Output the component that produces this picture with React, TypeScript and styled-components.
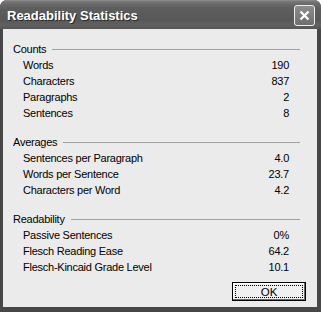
import styled, { createGlobalStyle } from "styled-components";

const GlobalStyle = createGlobalStyle`
  html, body {
    margin: 0;
    padding: 0;
    background: #ffffff;
  }
`;

const Window = styled.div`
  width: 321px;
  height: 312px;
  box-sizing: border-box;
  display: flex;
  flex-direction: column;
  background: #474747;
  border-radius: 7px 7px 0 0;
  overflow: hidden;
  font-family: "Liberation Sans", Arial, sans-serif;
`;

const TitleBar = styled.div`
  height: 29px;
  flex: none;
  display: flex;
  align-items: center;
  justify-content: space-between;
  padding: 0 6px 0 7px;
  background: linear-gradient(#8e8e8e 0px, #727272 2px, #5e5e5e 8px, #585858 20px, #606060 25px, #565656 29px);
`;

const Title = styled.span`
  color: #ffffff;
  font-family: "Liberation Sans", Arial, sans-serif;
  font-weight: bold;
  font-size: 13px;
  text-shadow: 1px 1px 0 #2a2a2a;
  padding-top: 2px;
`;

const CloseButton = styled.div`
  width: 19px;
  height: 19px;
  border: 1px solid #eeeeee;
  border-radius: 3px;
  background: linear-gradient(#8c8c8c, #6f6f6f);
  display: flex;
  align-items: center;
  justify-content: center;
  margin-top: 1px;
`;

const Client = styled.div`
  flex: 1;
  margin: 0 4px 5px 3px;
  background: #ebebeb;
  padding: 12px 11px 6px 10px;
  display: flex;
  flex-direction: column;
  font-size: 11px;
  letter-spacing: -0.25px;
  color: #000000;
`;

const Section = styled.div`
  margin-right: 6px;
  & + & {
    margin-top: 13px;
  }
`;

const Header = styled.div`
  height: 16px;
  display: flex;
  align-items: center;
  gap: 6px;
  &::after {
    content: "";
    flex: 1;
    height: 1px;
    background: #a2a2a2;
    margin-top: 1px;
  }
`;

const Row = styled.div`
  height: 16px;
  display: flex;
  align-items: center;
  justify-content: space-between;
  padding: 0 11px 0 10px;
`;

const Footer = styled.div`
  margin-top: auto;
  display: flex;
  justify-content: flex-end;
`;

const OkButton = styled.button`
  width: 74px;
  height: 19px;
  padding: 0;
  border: 1px solid #000000;
  background: #f0f0f0;
  font-family: "Liberation Sans", Arial, sans-serif;
  font-size: 11.5px;
  color: #000000;
  display: flex;
  align-items: stretch;
  box-shadow: inset -1px -1px 0 #6a6a6a, inset 1px 1px 0 #ffffff;
`;

const FocusRing = styled.span`
  flex: 1;
  margin: 2px;
  border: 1px dotted #000000;
  display: flex;
  align-items: center;
  justify-content: center;
`;

const sections: { title: string; rows: [string, string][] }[] = [
  {
    title: "Counts",
    rows: [
      ["Words", "190"],
      ["Characters", "837"],
      ["Paragraphs", "2"],
      ["Sentences", "8"],
    ],
  },
  {
    title: "Averages",
    rows: [
      ["Sentences per Paragraph", "4.0"],
      ["Words per Sentence", "23.7"],
      ["Characters per Word", "4.2"],
    ],
  },
  {
    title: "Readability",
    rows: [
      ["Passive Sentences", "0%"],
      ["Flesch Reading Ease", "64.2"],
      ["Flesch-Kincaid Grade Level", "10.1"],
    ],
  },
];

export default function App() {
  return (
    <>
      <GlobalStyle />
      <Window>
        <TitleBar>
          <Title>Readability Statistics</Title>
          <CloseButton>
            <svg width="11" height="11" viewBox="0 0 11 11">
              <path d="M1.5 1.5 L9.5 9.5 M9.5 1.5 L1.5 9.5" stroke="#ffffff" strokeWidth="2.2" />
            </svg>
          </CloseButton>
        </TitleBar>
        <Client>
          {sections.map((s) => (
            <Section key={s.title}>
              <Header>{s.title}</Header>
              {s.rows.map(([label, value]) => (
                <Row key={label}>
                  <span>{label}</span>
                  <span>{value}</span>
                </Row>
              ))}
            </Section>
          ))}
          <Footer>
            <OkButton>
              <FocusRing>OK</FocusRing>
            </OkButton>
          </Footer>
        </Client>
      </Window>
    </>
  );
}
